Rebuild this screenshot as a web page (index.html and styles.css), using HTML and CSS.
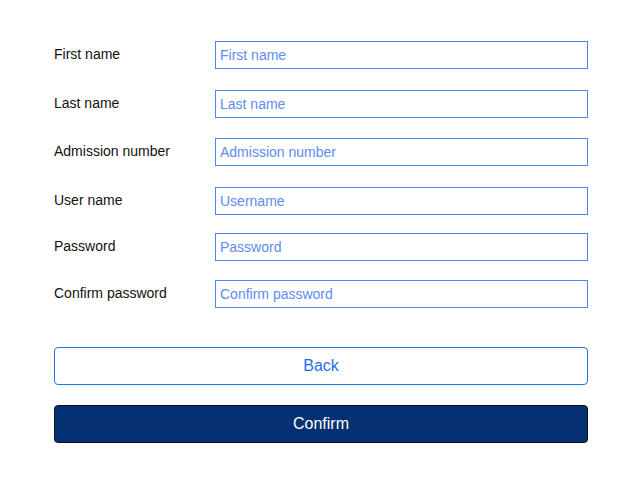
FILE: index.html
```html
<!DOCTYPE html>
<html lang="en">
<head>
<meta charset="utf-8">
<title>Register</title>
<link rel="stylesheet" href="styles.css">
</head>
<body>
<form class="form">
  <div class="row">
    <label class="label" for="fn">First name</label>
    <input class="field" id="fn" type="text" placeholder="First name">
  </div>
  <div class="row row-21">
    <label class="label" for="ln">Last name</label>
    <input class="field" id="ln" type="text" placeholder="Last name">
  </div>
  <div class="row row-20">
    <label class="label" for="an">Admission number</label>
    <input class="field" id="an" type="text" placeholder="Admission number">
  </div>
  <div class="row row-21">
    <label class="label" for="un">User name</label>
    <input class="field" id="un" type="text" placeholder="Username">
  </div>
  <div class="row row-18">
    <label class="label" for="pw">Password</label>
    <input class="field" id="pw" type="password" placeholder="Password">
  </div>
  <div class="row row-19">
    <label class="label" for="cpw">Confirm password</label>
    <input class="field" id="cpw" type="password" placeholder="Confirm password">
  </div>
  <div class="actions">
    <button type="button" class="btn btn-back">Back</button>
    <button type="button" class="btn btn-confirm">Confirm</button>
  </div>
</form>
</body>
</html>
```

FILE: styles.css
```css
* { box-sizing: border-box; }
html, body { margin: 0; padding: 0; background: #ffffff; }
body {
  font-family: "Liberation Sans", Arial, sans-serif;
  color: #1a1a1a;
}
.form {
  display: flex;
  flex-direction: column;
  width: 534px;
  margin: 0 0 0 54px;
  padding-top: 41px;
}
.row {
  display: flex;
  align-items: center;
  height: 28px;
}
.row-21 { margin-top: 21px; }
.row-20 { margin-top: 20px; }
.row-18 { margin-top: 18px; }
.row-19 { margin-top: 19px; }
.label {
  width: 161px;
  font-size: 14px;
  line-height: 16px;
  padding-bottom: 2px;
  color: #111111;
}
.field {
  width: 373px;
  height: 28px;
  margin: 0;
  border: 1px solid #4788ee;
  border-radius: 0;
  padding: 0 4px;
  font-family: "Liberation Sans", Arial, sans-serif;
  font-size: 14px;
  color: #222;
  background: #fff;
  outline: none;
}
.field::placeholder { color: #5e8cf1; opacity: 1; }
.actions {
  display: flex;
  flex-direction: column;
  gap: 20px;
  margin-top: 39px;
}
.btn {
  width: 534px;
  height: 38px;
  margin: 0;
  border-radius: 4px;
  font-family: "Liberation Sans", Arial, sans-serif;
  font-size: 16px;
  cursor: pointer;
}
.btn-back {
  background: #ffffff;
  border: 1px solid #1f74e6;
  color: #1f6fe8;
}
.btn-confirm {
  background: #053072;
  border: 1px solid #111111;
  color: #ffffff;
}
```
